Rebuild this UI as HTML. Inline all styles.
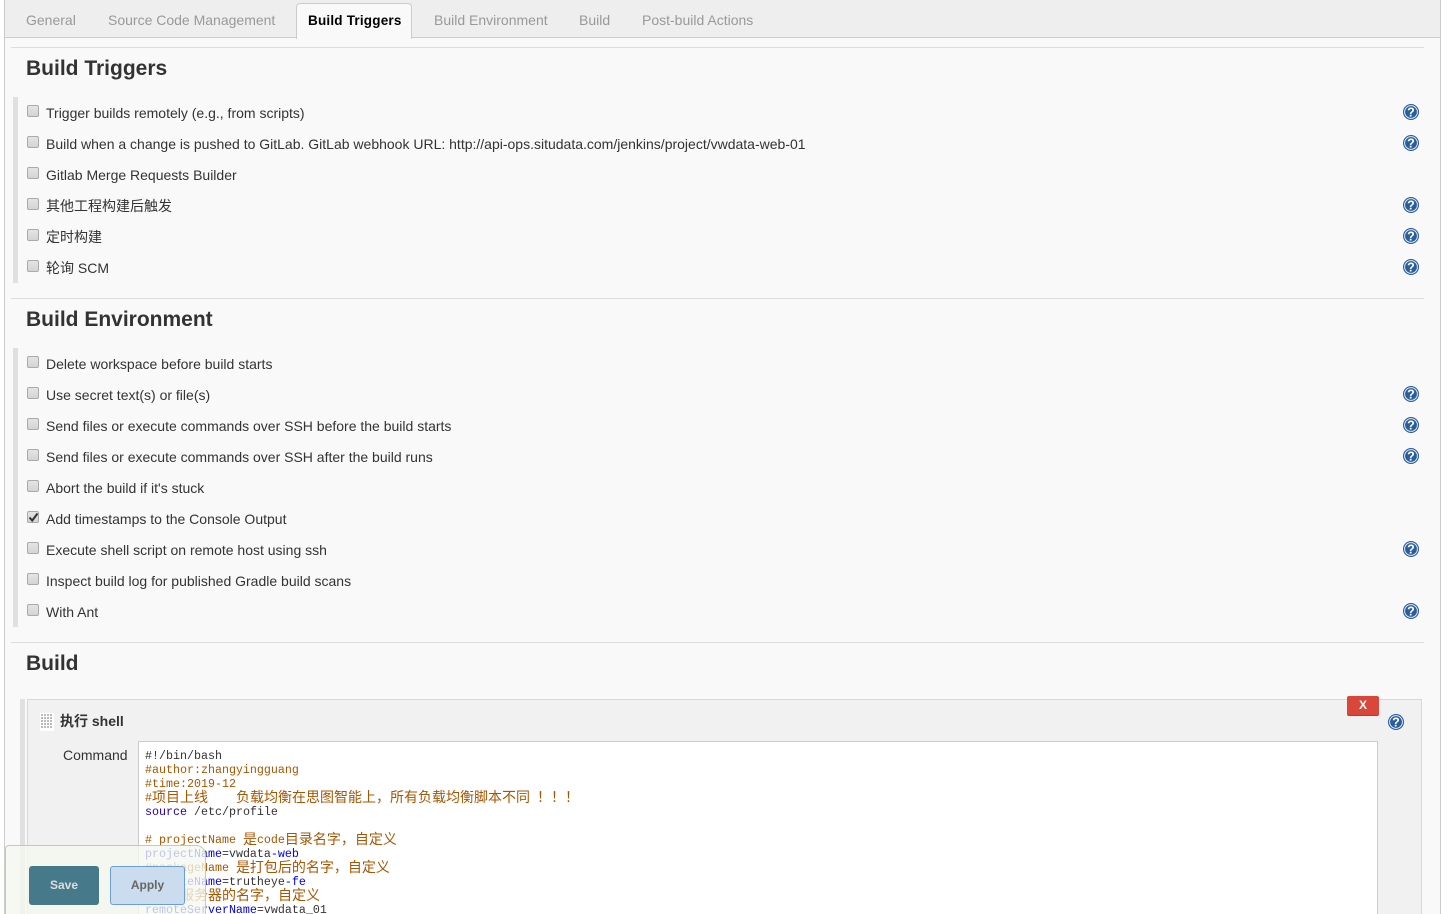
<!DOCTYPE html>
<html><head><meta charset="utf-8"><style>
html,body{margin:0;padding:0;background:#fff}
#p{position:relative;width:1450px;height:914px;overflow:hidden;background:#fff;font-family:"Liberation Sans","Noto Sans CJK SC",sans-serif;font-size:14px;color:#333}
#p div,#p svg{position:absolute}
.t{white-space:nowrap;line-height:18px}
.tab{top:11px;color:#999;white-space:nowrap;line-height:18px}
.h{left:26px;font-size:21px;font-weight:bold;color:#333;line-height:26px;white-space:nowrap}
.l{height:1px;left:11px;width:1413px;background:#ddd}
.b{width:10px;height:10px;left:27px;border:1px solid #aaa;border-radius:2px;background:linear-gradient(#e4e4e4,#d4d4d4)}
.c{left:145px;font:11.67px/14px "Liberation Mono","WenQuanYi Zen Hei",monospace;color:#333;white-space:pre}
.z{font:14px/14px "WenQuanYi Zen Hei","Noto Sans CJK SC",sans-serif;position:relative;top:1px}
.o{color:#a85500}.k{color:#2200aa}.n{color:#0000ee}
</style></head><body><div id="p">
<svg width="0" height="0" style="position:absolute"><defs><g id="q"><circle cx="8" cy="8" r="8" fill="#2a5d9c"/><circle cx="8" cy="8" r="6.4" fill="none" stroke="#dfe9f5" stroke-width="1"/><text x="8" y="12.4" text-anchor="middle" font-family="Liberation Sans" font-weight="bold" font-size="12.5" fill="#fff">?</text></g></defs></svg>
<div style="left:4px;top:0;width:1435px;height:914px;background:#f9f9f9;border-left:1px solid #ccc;border-right:1px solid #ccc"></div>
<div style="left:5px;top:0;width:1435px;height:37px;background:#eee;border-bottom:1px solid #ccc"></div>
<div style="left:296px;top:3px;width:114px;height:35px;background:#f9f9f9;border:1px solid #ccc;border-bottom:0;border-radius:4px 4px 0 0"></div>
<div class="tab" style="left:26px">General</div>
<div class="tab" style="left:108px">Source Code Management</div>
<div class="tab" style="left:308px;top:12px;color:#000;font-weight:bold;font-size:13.5px;letter-spacing:.2px">Build Triggers</div>
<div class="tab" style="left:434px">Build Environment</div>
<div class="tab" style="left:579px">Build</div>
<div class="tab" style="left:642px">Post-build Actions</div>

<div class="l" style="top:47px"></div>
<div class="h" style="top:56px">Build Triggers</div>
<div style="left:13px;top:97px;width:5px;height:186px;background:#e0e0e0"></div>
<div class="b" style="top:105px"></div><div class="t" style="left:46px;top:104px">Trigger builds remotely (e.g., from scripts)</div>
<div class="b" style="top:136px"></div><div class="t" style="left:46px;top:135px">Build when a change is pushed to GitLab. GitLab webhook URL: http://api-ops.situdata.com/jenkins/project/vwdata-web-01</div>
<div class="b" style="top:167px"></div><div class="t" style="left:46px;top:166px">Gitlab Merge Requests Builder</div>
<div class="b" style="top:198px"></div><div class="t" style="left:46px;top:197px">其他工程构建后触发</div>
<div class="b" style="top:229px"></div><div class="t" style="left:46px;top:228px">定时构建</div>
<div class="b" style="top:260px"></div><div class="t" style="left:46px;top:259px">轮询 SCM</div>
<svg style="left:1403px;top:104px" width="16" height="16"><use href="#q"/></svg>
<svg style="left:1403px;top:135px" width="16" height="16"><use href="#q"/></svg>
<svg style="left:1403px;top:197px" width="16" height="16"><use href="#q"/></svg>
<svg style="left:1403px;top:228px" width="16" height="16"><use href="#q"/></svg>
<svg style="left:1403px;top:259px" width="16" height="16"><use href="#q"/></svg>

<div class="l" style="top:298px"></div>
<div class="h" style="top:307px">Build Environment</div>
<div style="left:13px;top:348px;width:5px;height:279px;background:#e0e0e0"></div>
<div class="b" style="top:356px"></div><div class="t" style="left:46px;top:355px">Delete workspace before build starts</div>
<div class="b" style="top:387px"></div><div class="t" style="left:46px;top:386px">Use secret text(s) or file(s)</div>
<div class="b" style="top:418px"></div><div class="t" style="left:46px;top:417px">Send files or execute commands over SSH before the build starts</div>
<div class="b" style="top:449px"></div><div class="t" style="left:46px;top:448px">Send files or execute commands over SSH after the build runs</div>
<div class="b" style="top:480px"></div><div class="t" style="left:46px;top:479px">Abort the build if it's stuck</div>
<div class="b" style="top:511px"></div><svg style="left:28px;top:512px" width="11" height="11"><path d="M1.5 5.5L4.2 8.5L9.5 1.5" fill="none" stroke="#333" stroke-width="2"/></svg><div class="t" style="left:46px;top:510px">Add timestamps to the Console Output</div>
<div class="b" style="top:542px"></div><div class="t" style="left:46px;top:541px">Execute shell script on remote host using ssh</div>
<div class="b" style="top:573px"></div><div class="t" style="left:46px;top:572px">Inspect build log for published Gradle build scans</div>
<div class="b" style="top:604px"></div><div class="t" style="left:46px;top:603px">With Ant</div>
<svg style="left:1403px;top:386px" width="16" height="16"><use href="#q"/></svg>
<svg style="left:1403px;top:417px" width="16" height="16"><use href="#q"/></svg>
<svg style="left:1403px;top:448px" width="16" height="16"><use href="#q"/></svg>
<svg style="left:1403px;top:541px" width="16" height="16"><use href="#q"/></svg>
<svg style="left:1403px;top:603px" width="16" height="16"><use href="#q"/></svg>

<div class="l" style="top:642px"></div>
<div class="h" style="top:651px">Build</div>
<div style="left:20px;top:699px;width:5px;height:215px;background:#e0e0e0"></div>
<div style="left:27px;top:699px;width:1393px;height:215px;background:#f1f1f1;border:1px solid #d8d8d8;border-bottom:0"></div>
<div style="left:1347px;top:696px;width:32px;height:19px;background:#d9463a;border-bottom:1px solid #b93a30;border-radius:2px;color:#fff;font-weight:bold;font-size:12px;line-height:19px;text-align:center">X</div>
<svg style="left:1388px;top:714px" width="16" height="16"><use href="#q"/></svg>
<svg style="left:40px;top:713px" width="14" height="18"><rect width="14" height="18" fill="#fff"/><g fill="#bbb"><path d="M1 1h2v2H1zM4 1h2v2H4zM7 1h2v2H7zM10 1h2v2h-2zM1 4h2v2H1zM4 4h2v2H4zM7 4h2v2H7zM10 4h2v2h-2zM1 7h2v2H1zM4 7h2v2H4zM7 7h2v2H7zM10 7h2v2h-2zM1 10h2v2H1zM4 10h2v2H4zM7 10h2v2H7zM10 10h2v2h-2zM1 13h2v2H1zM4 13h2v2H4zM7 13h2v2H7zM10 13h2v2h-2z"/></g></svg>
<div class="t" style="left:60px;top:712px;font-weight:bold;color:#333">执行 shell</div>
<div class="t" style="left:63px;top:746px">Command</div>
<div style="left:138px;top:741px;width:1238px;height:173px;background:#fff;border:1px solid #ccc;border-bottom:0"></div>

<div class="c" style="top:749px">#!/bin/bash</div>
<div class="c o" style="top:763px">#author:zhangyingguang</div>
<div class="c o" style="top:777px">#time:2019-12</div>
<div class="c o" style="top:789px">#<span class="z">项目上线</span>    <span class="z">负载均衡在思图智能上，所有负载均衡脚本不同</span> <span class="z">！！！</span></div>
<div class="c" style="top:805px"><span class="k">source</span> /etc/profile</div>
<div class="c o" style="top:831px"># projectName <span class="z">是</span>code<span class="z">目录名字，自定义</span></div>
<div class="c" style="top:847px"><span class="n">projectName</span>=vwdata<span class="n">-web</span></div>
<div class="c o" style="top:859px">#packageName <span class="z">是打包后的名字，自定义</span></div>
<div class="c" style="top:875px"><span class="n">websiteName</span>=trutheye<span class="n">-fe</span></div>
<div class="c o" style="top:887px">#<span class="z">远程服务器的名字，自定义</span></div>
<div class="c" style="top:903px"><span class="n">remoteServerName</span>=vwdata_01</div>

<div style="left:5px;top:845px;width:199px;height:69px;background:rgba(245,248,240,.78);border:1px solid #b8d0b8;border-bottom:0;border-radius:4px 10px 0 0;box-sizing:content-box"></div>
<div style="left:29px;top:866px;width:70px;height:39px;background:#467a8b;border-radius:3px;color:#ddd;font-weight:bold;font-size:12px;line-height:38px;text-align:center">Save</div>
<div style="left:110px;top:866px;width:73px;height:37px;background:#cbdcee;border:1px solid #6b9fd4;border-radius:3px;color:#666;font-weight:bold;font-size:12px;line-height:37px;text-align:center">Apply</div>
</div></body></html>
